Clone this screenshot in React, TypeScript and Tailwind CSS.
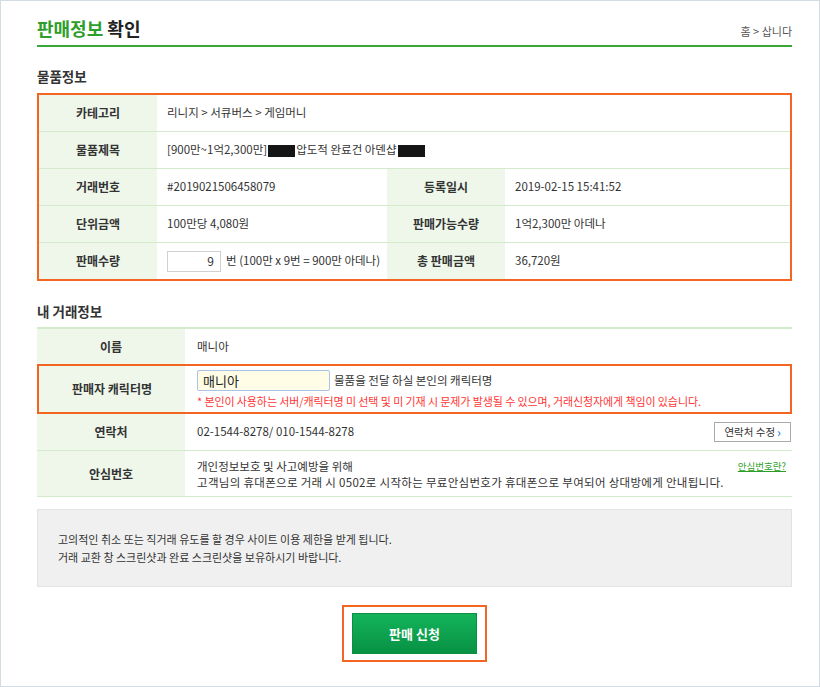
import React from "react";

const font = { fontFamily: '"Noto Sans CJK KR", "Noto Sans", sans-serif' };

function Redact() {
  return <span className="mx-[1px] inline-block h-[12px] w-[27px] translate-y-[1px] bg-[#151515]" />;
}

function Label({ children, className = "" }: { children: React.ReactNode; className?: string }) {
  return (
    <div className={`flex items-center justify-center bg-[#eef7ea] text-[12px] font-bold text-[#333] ${className}`}>
      {children}
    </div>
  );
}

function Value({ children, className = "" }: { children: React.ReactNode; className?: string }) {
  return <div className={`flex items-center pl-[10px] text-[11.5px] text-[#333] ${className}`}>{children}</div>;
}

export default function App() {
  return (
    <div style={font} className="h-[687px] w-[820px] border border-[#d3dbe3] bg-white">
      <div className="ml-[36px] w-[755px]">
        {/* title */}
        <div className="flex items-end justify-between border-b-2 border-[#3aa635] pt-[14px] pb-[4px]">
          <h1 className="text-[18px] font-bold leading-[26px] text-[#222]">
            <span className="text-[#2e9e2a]">판매정보</span> 확인
          </h1>
          <span className="mb-[2px] text-[11px] text-[#555]">홈 &gt; 삽니다</span>
        </div>

        {/* 물품정보 */}
        <h2 className="mt-[19px] text-[13.5px] font-semibold leading-[20px] text-[#333]">물품정보</h2>
        <div className="mt-[7px] border-2 border-[#f26522]">
          <div className="grid h-[36px] grid-cols-[118px_1fr]">
            <Label>카테고리</Label>
            <Value>리니지 &gt; 서큐버스 &gt; 게임머니</Value>
          </div>
          <div className="grid h-[37px] grid-cols-[118px_1fr] border-t border-[#d3ebcc]">
            <Label>물품제목</Label>
            <Value>
              [900만~1억2,300만] <Redact />
              압도적 완료건 아덴샵
              <Redact />
            </Value>
          </div>
          <div className="grid h-[37px] grid-cols-[118px_230px_118px_1fr] border-t border-[#d3ebcc]">
            <Label>거래번호</Label>
            <Value>#2019021506458079</Value>
            <Label>등록일시</Label>
            <Value>2019-02-15 15:41:52</Value>
          </div>
          <div className="grid h-[37px] grid-cols-[118px_230px_118px_1fr] border-t border-[#d3ebcc]">
            <Label>단위금액</Label>
            <Value>100만당 4,080원</Value>
            <Label>판매가능수량</Label>
            <Value>1억2,300만 아데나</Value>
          </div>
          <div className="grid h-[37px] grid-cols-[118px_230px_118px_1fr] border-t border-[#d3ebcc]">
            <Label>판매수량</Label>
            <Value>
              <span className="mr-[5px] flex h-[21px] w-[54px] items-center justify-end border border-[#d0d0d0] pr-[6px] text-[12px]">
                9
              </span>
              번 (100만 x 9번 = 900만 아데나)
            </Value>
            <Label>총 판매금액</Label>
            <Value>36,720원</Value>
          </div>
        </div>

        {/* 내 거래정보 */}
        <h2 className="mt-[20px] text-[13.5px] font-semibold leading-[20px] text-[#333]">내 거래정보</h2>
        <div className="mt-[6px] border-t-2 border-[#d3ebcc]">
          <div className="grid h-[35px] grid-cols-[148px_1fr]">
            <Label>이름</Label>
            <Value className="pl-[12px]">매니아</Value>
          </div>
          <div className="grid h-[50px] grid-cols-[146px_1fr] border-2 border-[#f26522]">
            <Label>판매자 캐릭터명</Label>
            <div className="flex flex-col justify-center pl-[12px]">
              <div className="flex items-center text-[11.5px] text-[#333]">
                <span className="mr-[4px] flex h-[21px] w-[133px] items-center rounded-[2px] border border-[#a9c3e6] bg-[#fffde6] pl-[5px] text-[13px] text-[#222]">
                  매니아
                </span>
                물품을 전달 하실 본인의 캐릭터명
              </div>
              <div className="mt-[3px] text-[11px] leading-[14px] tracking-[-0.1px] text-[#ff3636]">
                * 본인이 사용하는 서버/캐릭터명 미 선택 및 미 기재 시 문제가 발생될 수 있으며, 거래신청자에게 책임이 있습니다.
              </div>
            </div>
          </div>
          <div className="grid h-[37px] grid-cols-[148px_1fr] border-b border-[#d3ebcc]">
            <Label>연락처</Label>
            <Value className="justify-between pl-[12px] pr-[1px]">
              <span>02-1544-8278/ 010-1544-8278</span>
              <span className="flex h-[20px] items-center border border-[#aaa] px-[9px] text-[10.5px] text-[#333]">
                연락처 수정<span className="ml-[2px] text-[12px] font-bold text-[#3b8fd9]">›</span>
              </span>
            </Value>
          </div>
          <div className="grid h-[46px] grid-cols-[148px_1fr] border-b border-[#d3ebcc]">
            <Label>안심번호</Label>
            <div className="relative flex flex-col justify-center pl-[12px] text-[11.5px] leading-[16px] text-[#333]">
              <span>개인정보보호 및 사고예방을 위해</span>
              <span className="tracking-[0.3px]">
                고객님의 휴대폰으로 거래 시 0502로 시작하는 무료안심번호가 휴대폰으로 부여되어 상대방에게 안내됩니다.
              </span>
              <span className="absolute right-[6px] top-[7px] text-[9.5px] text-[#2e9e2a] underline">안심번호란?</span>
            </div>
          </div>
        </div>

        {/* notice */}
        <div className="mt-[12px] flex h-[78px] flex-col justify-center border border-[#e2e2e2] bg-[#f0f0f0] pl-[20px] text-[11px] leading-[18px] text-[#333]">
          <p>고의적인 취소 또는 직거래 유도를 할 경우 사이트 이용 제한을 받게 됩니다.</p>
          <p>거래 교환 창 스크린샷과 완료 스크린샷을 보유하시기 바랍니다.</p>
        </div>

        {/* submit */}
        <div className="mt-[18px] flex justify-center">
          <div className="border-2 border-[#f26522] px-[8px] py-[6px]">
            <button className="flex h-[41px] w-[125px] items-center justify-center border border-[#0b8e42] bg-gradient-to-b from-[#13b35b] to-[#089244] text-[13px] font-bold text-white">
              판매 신청
            </button>
          </div>
        </div>
      </div>
    </div>
  );
}
